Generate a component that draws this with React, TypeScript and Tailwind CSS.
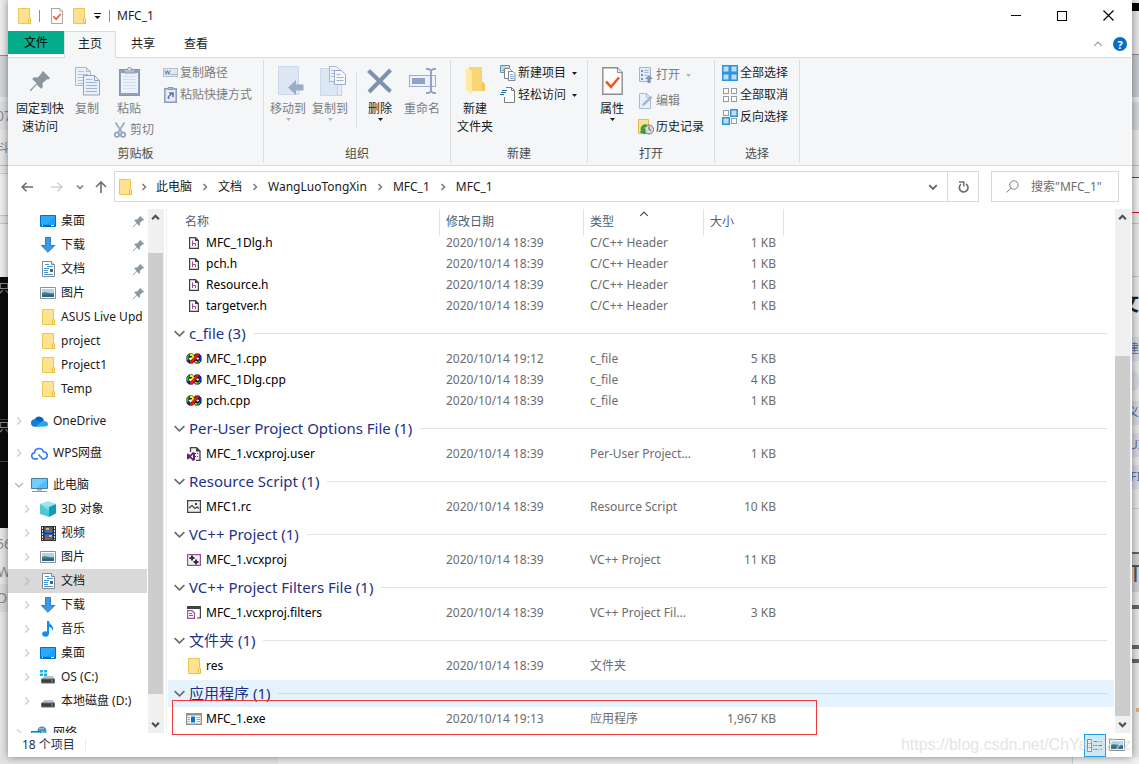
import { ReactNode, useState } from "react";
import clsx from "clsx";

/* ---------- icons ---------- */

const FolderIcon = () => (
  <svg width="13" height="16" viewBox="0 0 13 16">
    <path d="M.5.5h11v9l1 1v5H.5z" fill="#ffe290" stroke="#ecc652" />
    <path d="M10.5 15.5v-5l1-1 1 1v5z" fill="#ffe9a6" stroke="#e8bd3c" />
  </svg>
);

const CheckDocIcon = ({ width = 12, height = 16 }) => (
  <svg width={width} height={height} viewBox="0 0 21 28">
    <path d="M.8.8h14.6l4.8 4.8v21.6H.8z" fill="#fdfdfd" stroke="#8c8c8c" strokeWidth="1.4" />
    <path d="M15.4.8v4.8h4.8" fill="#e4e4e4" stroke="#8c8c8c" />
    <path d="M4 14.5l5 5.3 8-9.3" fill="none" stroke="#f2571d" strokeWidth="2.6" />
  </svg>
);

const PinIcon = ({ size = 20 }) => (
  <svg width={size} height={size} viewBox="0 0 20 20">
    <path
      d="M13 0l7 7-1.5 1.5-1.5-.3-4.5 4 .3 3.8-1.8 1.8-4.3-4.3L1 20H0v-1l6.5-6.7-4.3-4.3L4 6.2l3.8.3 4-4.5-.3-.5z"
      fill="#8a979f"
    />
  </svg>
);

const CopyIcon = () => (
  <svg width="25" height="29" viewBox="0 0 25 29">
    <path d="M.5.5h11l4 4v14H.5z" fill="#eaf0f9" stroke="#a9bad3" />
    <path d="M11.5.5v4h4" fill="none" stroke="#a9bad3" />
    <path d="M3 4.5h6M3 7.5h10M3 10.5h10M3 13.5h10M3 16.5h10" stroke="#b3c6e0" />
    <path d="M8.5 8.5h11l5 5v14.5h-16z" fill="#eaf0f9" stroke="#8fa3c2" />
    <path d="M19.5 8.5v5h5" fill="none" stroke="#8fa3c2" />
    <path d="M11 12.5h6M11 15.5h11M11 18.5h11M11 21.5h11M11 24.5h11" stroke="#9db4d4" />
  </svg>
);

const PasteIcon = () => (
  <svg width="21" height="30" viewBox="0 0 21 30">
    <rect x=".5" y="3.5" width="20" height="26" fill="#8ea2c0" stroke="#8196b8" />
    <path d="M2 7h17v20H2z" fill="#edf2fa" />
    <path d="M4 10.5h13M4 13.5h13M4 16.5h13M4 19.5h13M4 22.5h13" stroke="#d3dff0" />
    <path d="M5 7V3.5h3.5a2 2 0 0 1 4 0H16V7z" fill="#b3bccb" stroke="#8a98ae" />
    <circle cx="10.5" cy="3" r="1" fill="#f5f6f7" />
  </svg>
);

const CutIcon = () => (
  <svg width="12" height="16" viewBox="0 0 12 16">
    <path d="M1.5.5L8 10.5M10.5.5L4 10.5" stroke="#9aa9c3" strokeWidth="1.7" />
    <circle cx="3" cy="12.8" r="2.2" fill="none" stroke="#8da0c1" strokeWidth="1.6" />
    <circle cx="9" cy="12.8" r="2.2" fill="none" stroke="#8da0c1" strokeWidth="1.6" />
  </svg>
);

const CopyPathIcon = () => (
  <svg width="15" height="10" viewBox="0 0 15 10">
    <rect x=".5" y=".5" width="14" height="8" fill="#dfe8f5" stroke="#b4c2d8" />
    <path d="M2 2.5l1.300 4 1.200-4 1.300 4 1.200-4" fill="none" stroke="#6c80a3" />
    <path d="M8.5 6.5h1M10.5 6.5h1M12.5 6.5h1" stroke="#6c80a3" />
  </svg>
);

const PasteShortcutIcon = () => (
  <svg width="13" height="16" viewBox="0 0 13 16">
    <rect x=".8" y="1.8" width="11.4" height="13.4" fill="#e6edf8" stroke="#8da0c0" strokeWidth="1.6" />
    <path d="M4 2.5V.5h5v2z" fill="#b3bccb" stroke="#8a98ae" />
    <path d="M4.5 12V9.500L8 6.500M5 6h4v4" fill="none" stroke="#5c789f" strokeWidth="1.6" />
  </svg>
);

const MoveToIcon = () => (
  <svg width="32" height="30" viewBox="-4 0 32 30">
    <path d="M2.5.5h20v28h-20z" fill="#dde7f4" stroke="#ccd9ea" />
    <path d="M19 18h4v10h-4z" fill="#e8eef8" stroke="#c3d1e5" />
    <path d="M12 21.5l8-7.500v4.500h7.500v6H20V29z" fill="#9aacc8" />
  </svg>
);

const CopyToIcon = () => (
  <svg width="32" height="31" viewBox="-5 0 32 31">
    <path d="M1.5 2.5h19v27h-19z" fill="#dde7f4" stroke="#ccd9ea" />
    <path d="M18.5 19v10.500h4V19" fill="#e8eef8" stroke="#c3d1e5" />
    <path d="M10.5.5h7l3 3v12h-10z" fill="#f0f4fa" stroke="#a5b5ce" />
    <path d="M12 4.5h5M12 7.5h4M12 10.5h3" stroke="#a8bad4" />
    <path d="M15.5 4.5h7l4 4v10h-11z" fill="#f4f7fc" stroke="#98aac7" />
    <path d="M17.5 8.5h4M17.5 11.5h7M17.5 14.5h7" stroke="#9eb2d0" />
  </svg>
);

const DeleteIcon = () => (
  <svg width="26" height="26" viewBox="0 0 26 26">
    <path d="M1.5 2.5L23.5 23.5M23.5 2L2 24" stroke="#7f91b1" strokeWidth="4" />
  </svg>
);

const RenameIcon = () => (
  <svg width="30" height="26" viewBox="-2 0 30 26">
    <rect x=".5" y="7.5" width="26" height="11" fill="#eef2f8" stroke="#9caecb" />
    <path d="M3 10h13v6H3z" fill="#8fa4c4" />
    <path
      d="M17 1h2.500l2.500 1.500L24.500 1H27M17 25h2.500l2.500-1.500 2.500 1.500H27M22 2v22"
      fill="none"
      stroke="#91a3c1"
      strokeWidth="2"
    />
  </svg>
);

const NewFolderIcon = () => (
  <svg width="19" height="28" viewBox="0 0 19 28">
    <path d="M3 0h13v14l3 3v7H3z" fill="#f8d573" />
    <path d="M0 1l6 3v23l-6-4z" fill="#ffe9a3" />
    <path d="M16 14l3 3v7h-3z" fill="#f3c75a" />
  </svg>
);

const NewItemIcon = () => (
  <svg width="16" height="16" viewBox="0 0 16 16">
    <path d="M.5.5h9v7h-9z" fill="#bcdcec" stroke="#5e94b3" />
    <path d="M2 6l3-3 3 3z" fill="#6da78e" />
    <path d="M4.5 3.5h5l2 2v8h-7z" fill="#fff" stroke="#838383" />
    <path d="M8.5 6.5H13l2 2v7H8.500z" fill="#fff" stroke="#838383" />
    <path d="M10 9.5h3M10 11.5h4M10 13.5h4" stroke="#7fa8d8" />
  </svg>
);

const EasyAccessIcon = () => (
  <svg width="16" height="16" viewBox="0 0 16 16">
    <path d="M4.5 1.5h7l3 3v11h-10z" fill="#fff" />
    <path d="M6 .5h5.500l3 3v12h-10V10M11.500.5v3h3" fill="none" stroke="#7b7b7b" />
    <path d="M2 3.5h5M1 5.5h5M0 7.5h4" stroke="#1765ad" />
  </svg>
);

const OpenIcon = () => (
  <svg width="14" height="16" viewBox="0 0 14 16">
    <path d="M.5.5h11v14H.5z" fill="#e3ebf6" stroke="#a3b5d0" />
    <path d="M2 3h2v2H2zM2 7h2v2H2zM2 11h2v2H2z" fill="#7b92b8" />
    <path d="M5.5 3.5h4M5.5 5.5h4M5.5 8.5h3" stroke="#a3b5d0" />
    <path d="M10 8l4 4h-2.500v4h-3v-4H6z" fill="#8094b6" />
  </svg>
);

const EditIcon = () => (
  <svg width="14" height="16" viewBox="0 0 14 16">
    <path d="M.5.5h7l4 4v11H.5z" fill="#e9f0f9" stroke="#a8bad4" />
    <path d="M7.5.5v4h4" fill="none" stroke="#a8bad4" />
    <path d="M3 13l.8-2.500 8-7.500 1.700 1.700-8 7.500z" fill="#a3b5d0" />
  </svg>
);

const HistoryIcon = () => (
  <svg width="16" height="16" viewBox="0 0 16 16">
    <path d="M.5.5h10v14H.5z" fill="#ffe290" stroke="#e3bb46" />
    <circle cx="11" cy="10.5" r="4.5" fill="#d9dcdf" stroke="#777" />
    <path d="M11 7.5v3l2 1" fill="none" stroke="#555" />
    <path
      d="M8 5.5c-4 0-6 3-4.500 6.500L2 13l5 2V10l-1.500 1C5 9 6 7.500 9 7z"
      fill="#2bac35"
      stroke="#168020"
      strokeWidth=".5"
    />
  </svg>
);

const squares = [
  [0, 0],
  [8, 0],
  [0, 8],
  [8, 8],
];

const SelectionIcon = ({ on }: { on: number[] }) => (
  <svg width="16" height="16" viewBox="0 0 16 16">
    {squares.map(([x, y], i) =>
      on.includes(i) ? (
        <rect key={i} x={x + 0.75} y={y + 0.75} width="6.5" height="6.5" fill="#b9dffa" stroke="#2e93df" strokeWidth="1.5" />
      ) : (
        <rect key={i} x={x + 1.5} y={y + 1.5} width="5" height="5" fill="#fbfbfb" stroke="#9c9c9c" />
      )
    )}
  </svg>
);

const DesktopIcon = () => (
  <svg width="16" height="12" viewBox="0 0 16 12">
    <path d="M.5.5h15v11H.5z" fill="#1ba1fb" stroke="#0a6fbd" />
    <path d="M1 1h14L6 9H1z" fill="#41b4ff" opacity=".5" />
    <path d="M1 10.5h14" stroke="#0b5fa5" />
    <path d="M2 10.5h1M11 10.5h3" stroke="#fff" />
  </svg>
);

const DownloadIcon = () => (
  <svg width="16" height="16" viewBox="0 0 16 16">
    <path d="M5.5.5h5v8h4.300L8 15.300 1.200 8.500h4.300z" fill="#3c99e8" stroke="#2a7cc6" />
  </svg>
);

const DocumentIcon = () => (
  <svg width="13" height="16" viewBox="0 0 13 16">
    <path d="M.5.5h9l3 3v12H.5z" fill="#fff" stroke="#888" />
    <path d="M9.5.5v3h3" fill="#ddd" stroke="#888" />
    <path d="M3 3.5h4M5 5.5h6M2 7.5h5M2 9.5h4M2 11.5h4M2 13.5h9M8 10.5h3" stroke="#3f93d6" />
    <path d="M8 8h3v3H8z" fill="#47657c" />
  </svg>
);

const PictureIcon = () => (
  <svg width="16" height="12" viewBox="0 0 16 12">
    <path d="M.5.5h15v11H.5z" fill="#fff" stroke="#909090" />
    <path d="M2 2h12v8H2z" fill="#a9d2f5" />
    <path d="M2 6c4-2 6 1 12 0v4H2z" fill="#3f7d76" />
    <path d="M2 8.5c4-1 8 0 12-1V10H2z" fill="#2b5f94" />
  </svg>
);

const OneDriveIcon = () => (
  <svg width="17" height="11" viewBox="0 0 17 11">
    <path d="M4 10.5a3.500 3.500 0 0 1-.5-7A5 5 0 0 1 12.500 3l1 7z" fill="#0a63b8" />
    <path d="M3.5 3.5C6 3 8 5 10 6.500l-5 4H4a3.500 3.500 0 0 1-.5-7z" fill="#1280d8" />
    <path d="M4.5 10.5L10 6c2-1.800 7-1 7 2a2.500 2.500 0 0 1-2.500 2.500z" fill="#29a6ee" />
  </svg>
);

const WpsCloudIcon = () => (
  <svg width="17" height="13" viewBox="0 0 17 13">
    <path
      d="M7 11.8H4a3 3 0 0 1-.5-6 4.600 4.600 0 0 1 9-1 3.500 3.500 0 0 1 .5 7h-1.500L7.500 7.500"
      fill="none"
      stroke="#3f80f0"
      strokeWidth="1.7"
    />
  </svg>
);

const ComputerIcon = () => (
  <svg width="17" height="15" viewBox="0 0 17 15">
    <path d="M.5.5h16v10H.5z" fill="#53bdf8" stroke="#4a7d9e" />
    <path d="M1 1h15L6 10H1z" fill="#8bd5fd" opacity=".6" />
    <path d="M6 11h5v1.500H6z" fill="#9aa7b0" />
    <path d="M1 13.5h15" stroke="#7f97a8" />
  </svg>
);

const CubeIcon = () => (
  <svg width="16" height="16" viewBox="0 0 16 16">
    <path d="M0 3l8-3 8 3-7 3z" fill="#9ce6ee" />
    <path d="M0 3l9 3v10l-9-3z" fill="#4fc7d8" />
    <path d="M9 6l7-3v9.500L9 16z" fill="#0f9dbd" />
    <path d="M0 3l9 3v4z" fill="#7ddde7" />
  </svg>
);

const VideoIcon = () => (
  <svg width="15" height="15" viewBox="0 0 15 15">
    <path d="M0 0h15v15H0z" fill="#333" />
    <path d="M1.5 1v13M13.5 1v13" stroke="#e5e5e5" strokeDasharray="2 1" />
    <path d="M3.5 1h8v6h-8z" fill="#3767b0" />
    <path d="M3.5 8h8v6h-8z" fill="#2f6ea8" />
    <path d="M5 2h3v2H5zM8 9h3v2H8z" fill="#f0b429" />
    <path d="M8 4h3v2H8zM4 11h4v3H4z" fill="#c4472e" />
  </svg>
);

const MusicIcon = () => (
  <svg width="13" height="16" viewBox="0 0 13 16">
    <ellipse cx="3.5" cy="13" rx="3.3" ry="2.7" fill="#0f8ff0" />
    <path d="M5 0h2c0 4 5.500 4 4 10-.5-2.500-2-3.500-4-4v7H5z" fill="#0f8ff0" />
  </svg>
);

const DriveIcon = ({ system = false }) => (
  <svg width="16" height="14" viewBox="0 0 16 14">
    {system && <path d="M0 0h3v2.500H0zM4 0h3v2.500H4zM0 3.500h3V6H0zM4 3.500h3V6H4z" fill="#17b5ea" />}
    <path d="M4 6h9l2 3H2z" fill="#bfc3c6" />
    <path d="M1.5 9h13v4h-13z" fill="#3c4043" stroke="#686c6f" />
    <path d="M11 10.5h2v1h-2z" fill="#45e35c" />
  </svg>
);

const NetworkIcon = () => (
  <svg width="17" height="15" viewBox="0 0 17 15">
    <circle cx="11" cy="5" r="4.5" fill="#3d8ec4" />
    <path d="M8 3c2-1 3 1 5-1M8 6c2-1 4 1 6 0" fill="none" stroke="#b5e0f5" />
    <path d="M.5 5.5h9v6h-9z" fill="#5bb9ee" stroke="#3a6f90" />
    <path d="M2 13.5h12" stroke="#7f97a8" />
  </svg>
);

const HeaderFileIcon = () => (
  <svg width="10" height="12" viewBox="0 0 10 12">
    <path d="M.6.6h5.900l2.900 2.900v7.900H.6z" fill="#f8f5f9" stroke="#424242" strokeWidth="1.200" />
    <path d="M6 0l4 4H6z" fill="#424242" />
    <path d="M3.500 3.500V9M3.500 6.500h3V9" fill="none" stroke="#9b4f96" />
  </svg>
);

const CppIcon = () => (
  <svg width="16" height="11" viewBox="0 0 16 11">
    <path d="M3 .5h3.500L8 2l1.500-1.500H13L15.500 3v5L13 10.500H9.500L8 9l-1.500 1.500H3L.5 8V3z" fill="#111" />
    <path d="M1.800 7.500V3.500l1.700-1.700" fill="none" stroke="#0fc321" strokeWidth="1.600" />
    <path d="M1.800 7l1.700 2" stroke="#1122e8" strokeWidth="1.600" />
    <path d="M4 2h2l1.500 1.500L4 7M9 8.500l2 .5" fill="none" stroke="#f7ee13" strokeWidth="1.800" />
    <path d="M3 5.500h2.500M4.200 4.300v2.500M10.500 5.500H13M11.800 4.300v2.500" stroke="#fff" />
    <path d="M11.500 1.800h1l1.700 1.700v4" fill="none" stroke="#1122e8" strokeWidth="1.600" />
    <path d="M14 7.500L12.500 9h-2" fill="none" stroke="#0fc321" strokeWidth="1.600" />
    <path d="M4 9.200L6 9l5-7h-1.500" fill="none" stroke="#e8161c" strokeWidth="2.600" />
  </svg>
);

const UserFileIcon = () => (
  <svg width="14" height="14" viewBox="0 0 14 14">
    <path d="M3.5 5V.7h6L13 4v9.300H9" fill="#f4f4f4" stroke="#424242" strokeWidth="1.3" />
    <path d="M9 0l4.500 4.500H9z" fill="#424242" />
    <path d="M8 6.5h1M10 6.5h1M8 9.5h1M10 9.5h1" stroke="#424242" />
    <path d="M6 5l2 1v7l-2 1-3-3-2 1.500-1-.5V7l1-.5L3 8zM6 7.500L4 9.500l2 2z" fill="#68217a" />
  </svg>
);

const ResourceIcon = () => (
  <svg width="14" height="13" viewBox="0 0 14 13">
    <path d="M.6.6h12.800v11.800H.6z" fill="#f2f2f2" stroke="#424242" strokeWidth="1.200" />
    <path d="M2 8l3-2.500L8 8.500l2-1.500 2 1.500" fill="none" stroke="#424242" strokeWidth="1.2" />
    <path d="M8 3h2v2H8z" fill="#424242" />
  </svg>
);

const ProjectIcon = () => (
  <svg width="14" height="12" viewBox="0 0 14 12">
    <path d="M.6.6h12.800v10.800H.6z" fill="#f6f1f6" stroke="#9b4f96" strokeWidth="1.2" />
    <path d="M5 1.5v5M2.500 4h5M9 5.500v5M6.500 8h5" stroke="#333" strokeWidth="2" />
  </svg>
);

const FiltersIcon = () => (
  <svg width="14" height="13" viewBox="0 0 14 13">
    <path d="M0 0h14v3H0z" fill="#424242" />
    <path d="M13.400 3v9H10" fill="none" stroke="#424242" strokeWidth="1.200" />
    <path d="M.6 4.600H5L7.500 7v5.400H.6z" fill="#fff" stroke="#9b4f96" strokeWidth="1.2" />
    <path d="M2 7.5h3M2 9.5h4" stroke="#9b4f96" />
  </svg>
);

const ExeIcon = () => (
  <svg width="16" height="12" viewBox="0 0 16 12">
    <path d="M.7.7h14.600v10.600H.7z" fill="#fff" stroke="#8d9297" strokeWidth="1.4" />
    <path d="M1 1h14v1.500H1z" fill="#8d9297" />
    <path d="M5 3.5h4v6H5z" fill="#0b72cf" />
    <path d="M2 4.5h2M2 6.5h2M2 8.5h2M10.5 4.5H14M10.5 6.5H14M10.5 8.5H14" stroke="#a5a5a5" />
  </svg>
);

const Chevron = ({ dir = "right", color = "#7a7a7a", size = 8, thick = 1.5 }) => {
  const paths: Record<string, string> = {
    right: "M2.500 1l3 3-3 3",
    down: "M1 2.500l3 3 3-3",
    up: "M1 5.500l3-3 3 3",
  };
  return (
    <svg width={size} height={size} viewBox="0 0 8 8">
      <path d={paths[dir]} fill="none" stroke={color} strokeWidth={thick} />
    </svg>
  );
};

const Caret = ({ muted = false }) => (
  <svg width="5" height="3" viewBox="0 0 5 3">
    <path d="M0 0h5L2.500 3z" fill={muted ? "#b5b5b5" : "#1b1b1b"} />
  </svg>
);

/* ---------- ribbon ---------- */

type BigButtonProps = {
  icon: ReactNode;
  lines: string[];
  className: string;
  muted?: boolean;
  caret?: boolean;
};

const BigButton = ({ icon, lines, className, muted, caret }: BigButtonProps) => (
  <button className={clsx("flex flex-col items-center whitespace-nowrap", muted && "text-[#7d7d7d]", className)}>
    <span className="mb-[2px] flex h-[34px] items-center">{icon}</span>
    {lines.map((line) => (
      <span key={line} className="leading-[18px]">
        {line}
      </span>
    ))}
    {caret && <Caret muted={muted} />}
  </button>
);

type SmallButtonProps = {
  icon: ReactNode;
  label: string;
  muted?: boolean;
  caret?: boolean;
};

const SmallButton = ({ icon, label, muted, caret }: SmallButtonProps) => (
  <button className={clsx("flex h-[22px] items-center gap-[2px] whitespace-nowrap", muted && "text-[#7d7d7d]")}>
    <span className="flex w-4 justify-center">{icon}</span>
    <span>{label}</span>
    {caret && (
      <span className="ml-1">
        <Caret muted={muted} />
      </span>
    )}
  </button>
);

const RibbonGroup = ({ title, className, children }: { title: string; className: string; children: ReactNode }) => (
  <section className={clsx("my-[2px] flex flex-col border-r border-[#dcdee0]", className)}>
    <div className="flex flex-1 pt-1">{children}</div>
    <h2 className="pb-[1px] text-center leading-4 text-[#4c4c4c]">{title}</h2>
  </section>
);

const Ribbon = () => (
  <div className="flex h-[109px] shrink-0 border-y border-[#d9dbdd] bg-[#f4f6f8]">
    <RibbonGroup title="剪贴板" className="w-[256px]">
      <BigButton icon={<PinIcon />} lines={["固定到快", "速访问"]} className="w-16" />
      <BigButton icon={<CopyIcon />} lines={["复制"]} className="w-[30px]" muted />
      <div className="flex w-[54px] flex-col items-center gap-px">
        <BigButton icon={<PasteIcon />} lines={["粘贴"]} className="w-10" muted />
        <div className="pl-2">
          <SmallButton icon={<CutIcon />} label="剪切" muted />
        </div>
      </div>
      <div className="-mt-[2px] ml-[6px] flex flex-col">
        <SmallButton icon={<CopyPathIcon />} label="复制路径" muted />
        <SmallButton icon={<PasteShortcutIcon />} label="粘贴快捷方式" muted />
      </div>
    </RibbonGroup>
    <RibbonGroup title="组织" className="w-[187px] [&>div]:pl-1">
      <BigButton icon={<MoveToIcon />} lines={["移动到"]} className="w-10" muted caret />
      <BigButton icon={<CopyToIcon />} lines={["复制到"]} className="w-11" muted caret />
      <div className="mt-2 mr-[3px] ml-1 h-14 w-px bg-[#dcdee0]" />
      <BigButton icon={<DeleteIcon />} lines={["删除"]} className="w-10" caret />
      <BigButton icon={<RenameIcon />} lines={["重命名"]} className="w-11" muted />
    </RibbonGroup>
    <RibbonGroup title="新建" className="w-[137px]">
      <BigButton icon={<NewFolderIcon />} lines={["新建", "文件夹"]} className="w-12" />
      <div className="-mt-[2px] ml-px flex flex-col">
        <SmallButton icon={<NewItemIcon />} label="新建项目" caret />
        <SmallButton icon={<EasyAccessIcon />} label="轻松访问" caret />
      </div>
    </RibbonGroup>
    <RibbonGroup title="打开" className="w-[127px]">
      <BigButton icon={<CheckDocIcon width={21} height={28} />} lines={["属性"]} className="w-12" caret />
      <div className="ml-[2px] flex flex-col gap-1">
        <SmallButton icon={<OpenIcon />} label="打开" muted caret />
        <SmallButton icon={<EditIcon />} label="编辑" muted />
        <SmallButton icon={<HistoryIcon />} label="历史记录" />
      </div>
    </RibbonGroup>
    <RibbonGroup title="选择" className="w-[85px] [&>div]:pl-[7px]">
      <div className="-mt-[2px] flex flex-col">
        <SmallButton icon={<SelectionIcon on={[0, 1, 2, 3]} />} label="全部选择" />
        <SmallButton icon={<SelectionIcon on={[]} />} label="全部取消" />
        <SmallButton icon={<SelectionIcon on={[1, 2]} />} label="反向选择" />
      </div>
    </RibbonGroup>
  </div>
);

/* ---------- title, tabs, address ---------- */

const TitleBar = () => (
  <header className="flex h-[31px] shrink-0 items-center pl-[10px]">
    <FolderIcon />
    <span className="ml-2 h-3 w-px bg-[#8f8f8f]" />
    <button aria-label="属性" className="ml-[11px]">
      <CheckDocIcon />
    </button>
    <button aria-label="新建文件夹" className="ml-[10px]">
      <FolderIcon />
    </button>
    <button aria-label="自定义快速访问工具栏" className="ml-2">
      <svg width="7" height="6" viewBox="0 0 7 6">
        <path d="M0 0h7v1H0zM.5 3h6l-3 3z" fill="#111" />
      </svg>
    </button>
    <span className="ml-2 h-3 w-px bg-[#8f8f8f]" />
    <h1 className="ml-[7px] flex-1">MFC_1</h1>
    <button aria-label="最小化" className="flex h-full w-[46px] items-center justify-center">
      <span className="h-px w-[10px] bg-black" />
    </button>
    <button aria-label="最大化" className="flex h-full w-[46px] items-center justify-center">
      <span className="size-[10px] border border-black" />
    </button>
    <button aria-label="关闭" className="flex h-full w-[46px] items-center justify-center">
      <svg width="11" height="11" viewBox="0 0 11 11">
        <path d="M.5.5l10 10M10.5.5l-10 10" stroke="#000" strokeWidth="1.200" />
      </svg>
    </button>
  </header>
);

const Tabs = () => (
  <nav className="flex h-[26px] shrink-0 items-start">
    <button className="h-[23px] w-14 bg-[#04ad8c] text-black">文件</button>
    <button className="z-10 h-[27px] w-[52px] border border-b-0 border-[#d9dbdd] bg-[#f4f6f8] pb-[2px]">主页</button>
    <button className="h-[26px] w-[54px]">共享</button>
    <button className="h-[26px] w-[52px]">查看</button>
    <div className="flex h-[26px] flex-1 items-center justify-end gap-[10px] pr-1">
      <button aria-label="折叠功能区">
        <Chevron dir="up" color="#9a9a9a" size={10} thick={1} />
      </button>
      <button
        aria-label="帮助"
        className="flex size-[14px] items-center justify-center rounded-full bg-[#0a6cc6] text-[11px] leading-none font-bold text-white"
      >
        ?
      </button>
    </div>
  </nav>
);

const crumbs = ["此电脑", "文档", "WangLuoTongXin", "MFC_1", "MFC_1"];

const AddressBar = () => (
  <div className="flex h-[43px] shrink-0 items-start pt-[5px] pr-3 pl-1">
    <button aria-label="后退" className="flex h-8 w-[30px] items-center justify-center">
      <svg width="12" height="10" viewBox="0 0 12 10">
        <path d="M12 5H1M5.500.700L1 5l4.500 4.300" fill="none" stroke="#6b6b6b" strokeWidth="1.5" />
      </svg>
    </button>
    <button aria-label="前进" className="flex h-8 w-[30px] items-center justify-center">
      <svg width="12" height="10" viewBox="0 0 12 10">
        <path d="M0 5h11M6.500.700L11 5 6.500 9.300" fill="none" stroke="#cfcfcf" strokeWidth="1.5" />
      </svg>
    </button>
    <button aria-label="最近的位置" className="flex h-8 w-4 items-center justify-center">
      <Chevron dir="down" />
    </button>
    <button aria-label="上移" className="flex h-8 w-[26px] items-center justify-center">
      <svg width="12" height="12" viewBox="0 0 12 12">
        <path d="M6 12V1M1 6l5-5 5 5" fill="none" stroke="#6b6b6b" strokeWidth="1.6" />
      </svg>
    </button>
    <div className="flex h-[31px] flex-1 items-center border border-[#d9d9d9] pl-1">
      <FolderIcon />
      {crumbs.map((crumb, i) => (
        <div key={i} className="flex items-center">
          <span className={i === 0 ? "mx-2" : "mx-[9px]"}>
            <Chevron />
          </span>
          <a href="#">{crumb}</a>
        </div>
      ))}
      <button aria-label="以前的位置" className="ml-auto flex h-full w-7 items-center justify-center">
        <Chevron dir="down" color="#666" size={10} />
      </button>
      <button aria-label="刷新" className="flex h-full w-[31px] items-center justify-center border-l border-[#d9d9d9]">
        <svg width="11" height="12" viewBox="0 0 11 12">
          <path d="M3 3.200A4.300 4.300 0 1 0 8 3" fill="none" stroke="#707070" strokeWidth="1.7" />
          <path d="M1 1h4.800v4.500" fill="none" stroke="#707070" strokeWidth="1.5" />
        </svg>
      </button>
    </div>
    <label className="ml-3 flex h-[31px] w-[128px] items-center border border-[#d9d9d9] pl-[14px]">
      <svg width="13" height="13" viewBox="0 0 13 13" className="shrink-0">
        <circle cx="8" cy="5" r="4.2" fill="none" stroke="#85807f" />
        <path d="M5 8L.5 12.500" stroke="#85807f" />
      </svg>
      <input
        aria-label="搜索"
        placeholder={'搜索"MFC_1"'}
        className="ml-3 w-full min-w-0 outline-none placeholder:text-[#6d6d6d]"
      />
    </label>
  </div>
);

/* ---------- scrollbars ---------- */

const ScrollBar = ({ thumb }: { thumb: string }) => (
  <div className="flex w-4 shrink-0 flex-col bg-[#f0f0f0] pr-px">
    <button aria-label="向上滚动" className="flex h-[17px] shrink-0 items-center justify-center">
      <Chevron dir="up" color="#505050" size={9} thick={2} />
    </button>
    <div className={clsx("flex flex-1 flex-col", thumb)}>
      <div className="flex-1 bg-[#cdcdcd]" />
    </div>
    <button aria-label="向下滚动" className="flex h-[17px] shrink-0 items-center justify-center">
      <Chevron dir="down" color="#505050" size={9} thick={2} />
    </button>
  </div>
);

/* ---------- navigation pane ---------- */

type NavNode = { label: string; icon: ReactNode };

const quickAccess: (NavNode & { pinned?: boolean })[] = [
  { label: "桌面", icon: <DesktopIcon />, pinned: true },
  { label: "下载", icon: <DownloadIcon />, pinned: true },
  { label: "文档", icon: <DocumentIcon />, pinned: true },
  { label: "图片", icon: <PictureIcon />, pinned: true },
  { label: "ASUS Live Upd", icon: <FolderIcon /> },
  { label: "project", icon: <FolderIcon /> },
  { label: "Project1", icon: <FolderIcon /> },
  { label: "Temp", icon: <FolderIcon /> },
];

const thisPc: NavNode[] = [
  { label: "3D 对象", icon: <CubeIcon /> },
  { label: "视频", icon: <VideoIcon /> },
  { label: "图片", icon: <PictureIcon /> },
  { label: "文档", icon: <DocumentIcon /> },
  { label: "下载", icon: <DownloadIcon /> },
  { label: "音乐", icon: <MusicIcon /> },
  { label: "桌面", icon: <DesktopIcon /> },
  { label: "OS (C:)", icon: <DriveIcon system /> },
  { label: "本地磁盘 (D:)", icon: <DriveIcon /> },
];

const NavRoot = ({ label, icon, open }: NavNode & { open?: boolean }) => (
  <a href="#" className="mt-2 flex h-6 shrink-0 items-center pl-[6px] whitespace-nowrap">
    <Chevron dir={open ? "down" : "right"} color={open ? "#a8a8a8" : "#d0d0d0"} size={10} thick={1} />
    <span className="ml-[7px] flex w-[17px] justify-center">{icon}</span>
    <span className="ml-[5px]">{label}</span>
  </a>
);

const NavigationPane = () => {
  const [selected, setSelected] = useState(3);

  return (
    <nav className="flex w-[140px] shrink-0 flex-col overflow-hidden">
      {quickAccess.map(({ label, icon, pinned }) => (
        <a href="#" key={label} className="flex h-6 shrink-0 items-center pl-8 whitespace-nowrap">
          <span className="flex w-4 justify-center">{icon}</span>
          <span className="ml-[5px] flex-1">{label}</span>
          {pinned && (
            <span className="mr-1">
              <PinIcon size={11} />
            </span>
          )}
        </a>
      ))}
      <NavRoot label="OneDrive" icon={<OneDriveIcon />} />
      <NavRoot label="WPS网盘" icon={<WpsCloudIcon />} />
      <NavRoot label="此电脑" icon={<ComputerIcon />} open />
      {thisPc.map(({ label, icon }, i) => (
        <a
          href="#"
          key={label}
          onClick={() => setSelected(i)}
          className={clsx(
            "flex h-6 shrink-0 items-center pl-[14px] whitespace-nowrap",
            selected === i && "mr-px bg-[#d9d9d9]"
          )}
        >
          <Chevron color={selected === i ? "#bdbdbd" : "#d0d0d0"} size={10} thick={1} />
          <span className="ml-2 flex w-4 justify-center">{icon}</span>
          <span className="ml-[5px]">{label}</span>
        </a>
      ))}
      <NavRoot label="网络" icon={<NetworkIcon />} />
    </nav>
  );
};

/* ---------- file list ---------- */

type FileRow = { name: string; date: string; type: string; size?: string; marked?: boolean };
type FileGroup = { title?: string; icon: ReactNode; files: FileRow[]; active?: boolean };

const groups: FileGroup[] = [
  {
    icon: <HeaderFileIcon />,
    files: [
      { name: "MFC_1Dlg.h", date: "2020/10/14 18:39", type: "C/C++ Header", size: "1 KB" },
      { name: "pch.h", date: "2020/10/14 18:39", type: "C/C++ Header", size: "1 KB" },
      { name: "Resource.h", date: "2020/10/14 18:39", type: "C/C++ Header", size: "1 KB" },
      { name: "targetver.h", date: "2020/10/14 18:39", type: "C/C++ Header", size: "1 KB" },
    ],
  },
  {
    title: "c_file (3)",
    icon: <CppIcon />,
    files: [
      { name: "MFC_1.cpp", date: "2020/10/14 19:12", type: "c_file", size: "5 KB" },
      { name: "MFC_1Dlg.cpp", date: "2020/10/14 18:39", type: "c_file", size: "4 KB" },
      { name: "pch.cpp", date: "2020/10/14 18:39", type: "c_file", size: "1 KB" },
    ],
  },
  {
    title: "Per-User Project Options File (1)",
    icon: <UserFileIcon />,
    files: [{ name: "MFC_1.vcxproj.user", date: "2020/10/14 18:39", type: "Per-User Project...", size: "1 KB" }],
  },
  {
    title: "Resource Script (1)",
    icon: <ResourceIcon />,
    files: [{ name: "MFC1.rc", date: "2020/10/14 18:39", type: "Resource Script", size: "10 KB" }],
  },
  {
    title: "VC++ Project (1)",
    icon: <ProjectIcon />,
    files: [{ name: "MFC_1.vcxproj", date: "2020/10/14 18:39", type: "VC++ Project", size: "11 KB" }],
  },
  {
    title: "VC++ Project Filters File (1)",
    icon: <FiltersIcon />,
    files: [{ name: "MFC_1.vcxproj.filters", date: "2020/10/14 18:39", type: "VC++ Project Fil...", size: "3 KB" }],
  },
  {
    title: "文件夹 (1)",
    icon: <FolderIcon />,
    files: [{ name: "res", date: "2020/10/14 18:39", type: "文件夹" }],
  },
  {
    title: "应用程序 (1)",
    icon: <ExeIcon />,
    active: true,
    files: [{ name: "MFC_1.exe", date: "2020/10/14 19:13", type: "应用程序", size: "1,967 KB", marked: true }],
  },
];

const columns = [
  { label: "名称", pad: "pl-[17px]" },
  { label: "修改日期", pad: "pl-[6px]" },
  { label: "类型", pad: "pl-[6px]", sorted: true },
  { label: "大小", pad: "pl-[6px]" },
];

const FileList = () => (
  <main className="min-w-0 flex-1 border-l border-[#f0f0f0] pr-px pl-px">
    <table className="w-full table-fixed border-collapse text-left">
      <colgroup>
        <col className="w-[272px]" />
        <col className="w-36" />
        <col className="w-[120px]" />
        <col className="w-20" />
        <col />
      </colgroup>
      <thead>
        <tr className="h-[23px]">
          {columns.map(({ label, pad, sorted }) => (
            <th key={label} className={clsx("relative p-0 font-normal text-[#4c607a]", pad)}>
              <button className="block pt-[3px] leading-5">{label}</button>
              {sorted && (
                <span className="absolute top-0 left-1/2 -translate-x-1/2">
                  <Chevron dir="up" color="#4a4a4a" size={10} thick={1} />
                </span>
              )}
              <span className="absolute top-0 right-0 h-[27px] w-px bg-[#e3e3e3]" />
            </th>
          ))}
          <th className="p-0" />
        </tr>
      </thead>
      {groups.map(({ title, icon, files, active }, i) => (
        <tbody key={i}>
          {title && (
            <tr>
              <th colSpan={5} className="h-8 p-0 pt-1 align-top font-normal">
                <button
                  className={clsx(
                    "flex h-[27px] w-full items-center pr-[7px] pl-[5px] text-[15px] whitespace-nowrap text-[#1e3287]",
                    active && "bg-[#e5f3fe]"
                  )}
                >
                  <Chevron dir="down" color="#6b6b6b" size={13} thick={1} />
                  <span className="ml-[3px] pb-[2px]">{title}</span>
                  <span className={clsx("ml-2 h-px flex-1", active ? "bg-[#cbdcea]" : "bg-[#e2e2e2]")} />
                </button>
              </th>
            </tr>
          )}
          {files.map((file) => (
            <tr key={file.name} className="h-[21px] leading-5 text-[#6d6d6d]">
              <td className="relative p-0 text-black">
                <div className="flex items-center pl-[18px]">
                  <span className="flex w-4 justify-center">{icon}</span>
                  <a href="#" className="ml-1">
                    {file.name}
                  </a>
                </div>
                {file.marked && (
                  <span className="pointer-events-none absolute -top-2 left-1 z-10 h-[35px] w-[645px] border border-[#ee3a3a]" />
                )}
              </td>
              <td className="p-0 pl-[6px]">{file.date}</td>
              <td className="p-0 pl-[6px]">{file.type}</td>
              <td className="p-0 pr-2 text-right">{file.size}</td>
              <td className="p-0" />
            </tr>
          ))}
        </tbody>
      ))}
    </table>
  </main>
);

/* ---------- status bar ---------- */

const StatusBar = () => (
  <footer className="relative flex h-6 shrink-0 items-center pr-[6px] pl-[14px] text-[#1e3250]">
    <span>18 个项目</span>
    <span className="ml-[10px] h-3 w-px bg-[#ececec]" />
    <button
      aria-label="详细信息"
      className="ml-auto flex h-[23px] w-[22px] items-center justify-center border border-[#26a0da] bg-[#cce8f6]"
    >
      <svg width="16" height="13" viewBox="0 0 16 13">
        <path d="M.5.5h4v12h-4z" fill="#fff" stroke="#8a8a8a" />
        <path d="M0 4.5h5M0 8.5h5" stroke="#8a8a8a" />
        <path d="M2 2h1v1H2zM2 6h1v1H2z" fill="#2a7cc6" />
        <path d="M2 10h1v1H2z" fill="#c33" />
        <path d="M6 2.5h10M6 6.5h10M6 10.5h10" stroke="#777" strokeDasharray="4 1" />
      </svg>
    </button>
    <button aria-label="大缩略图" className="ml-[3px]">
      <PictureIcon />
    </button>
    <span className="pointer-events-none absolute top-0 right-0 font-['Liberation_Sans'] text-base leading-6 text-[#dedede] opacity-80">
      https://blog.csdn.net/ChYangZzz
    </span>
  </footer>
);

/* ---------- windows behind ---------- */

const LeftEdge = () => (
  <div className="flex w-2 shrink-0 flex-col overflow-hidden bg-[#e6e6e6] text-[#8c8c8c]">
    <div className="h-[55px] bg-[#ededed]" />
    <div className="h-[42px] border-t border-[#8f8f8f] bg-[#d2d5d9]" />
    <div className="mt-[5px] flex h-7 items-center justify-center bg-[#dcdee1] text-sm">07</div>
    <div className="flex h-9 items-center justify-center border-b border-[#bdbdbd]">斗</div>
    <div className="h-2 border-b border-[#cfcfcf]" />
    <div className="h-[42px] border-b border-[#c4c4c4] bg-[#efefef]" />
    <div className="h-2 border-b border-[#c4c4c4]" />
    <div className="h-[53px] bg-[#ededed]" />
    <div className="flex h-[143px] items-start justify-center border-b border-[#a02020] bg-[#0c0c0c] pt-1">只</div>
    <div className="flex h-[42px] items-start justify-center border-b border-[#a02020] bg-[#0c0c0c]">只</div>
    <div className="h-[66px] bg-[#0c0c0c]" />
    <div className="flex h-8 items-center justify-center text-sm">56</div>
    <div className="flex h-6 items-center justify-center text-sm">W</div>
    <div className="flex h-7 items-center justify-center bg-[#dadada] text-sm">Di</div>
  </div>
);

const RightEdge = () => (
  <div className="flex w-[7px] shrink-0 flex-col overflow-hidden bg-[#e6e6e6] text-[#5f6f9c]">
    <div className="mt-[3px] h-2 bg-black" />
    <div className="h-[44px] border-b border-[#8a8a8a]" />
    <div className="h-[42px] bg-[#c6c9cd]" />
    <div className="mt-[5px] h-7 bg-[#d4d5d8]" />
    <div className="h-9 border-b border-[#bdbdbd]" />
    <div className="mt-[11px] h-[36px] border-y border-[#c41a1f] bg-[#efefef]" />
    <div className="h-[11px] border-b border-[#c4c4c4]" />
    <div className="h-[53px] border-b border-[#c4c4c4]" />
    <div className="flex h-[54px] items-center justify-end text-xl font-bold text-[#222]">文</div>
    <div className="mt-[6px] flex h-6 items-center justify-end bg-[#d5d8e0]">建</div>
    <div className="mt-[10px] h-5 rounded-r-full bg-[#d5d8e0]" />
    <div className="mt-[10px] flex h-6 items-center justify-end bg-[#d5d8e0]">义</div>
    <div className="mt-2 flex h-6 items-center justify-center bg-[#d5d8e0]">UI</div>
    <div className="mt-2 flex h-6 items-center justify-center bg-[#d5d8e0]">FI</div>
    <div className="h-5 border-b border-[#cfcfcf]" />
    <div className="mt-[43px] flex h-10 items-center justify-center border-t-2 border-[#666] bg-[#cfcfcf] text-2xl text-[#555]">
      T
    </div>
    <div className="mt-[13px] h-1 bg-[#666]" />
    <div className="mt-9 h-1 bg-[#666]" />
    <div className="mt-[10px] h-1 bg-[#666]" />
    <div className="mt-[45px] ml-1 h-1 bg-[#dcae74]" />
  </div>
);

const App = () => {
  return (
    <div className="flex h-screen flex-col overflow-hidden bg-[#e6e6e6] font-['Noto_Sans','Noto_Sans_CJK_SC',sans-serif] text-xs text-[#1b1b1b]">
      <div className="flex min-h-0 flex-1">
        <LeftEdge />
        <div className="z-10 flex min-w-0 flex-1 flex-col bg-white pr-px shadow-[0_0_8px_rgba(0,0,0,0.45)]">
          <TitleBar />
          <Tabs />
          <Ribbon />
          <AddressBar />
          <div className="flex min-h-0 flex-1">
            <NavigationPane />
            <ScrollBar thumb="pt-[27px] pb-[22px]" />
            <div className="w-[2px]" />
            <FileList />
            <ScrollBar thumb="pt-[130px]" />
          </div>
          <StatusBar />
        </div>
        <RightEdge />
      </div>
      <div className="flex h-[7px] shrink-0">
        <div className="w-[278px] bg-[#e3e3e3]" />
        <div className="flex-1 border-r border-[#cfcfcf] bg-[#ebebeb]" />
        <div className="w-[66px] bg-[#f1f1f1]" />
      </div>
    </div>
  );
};

export default App;
